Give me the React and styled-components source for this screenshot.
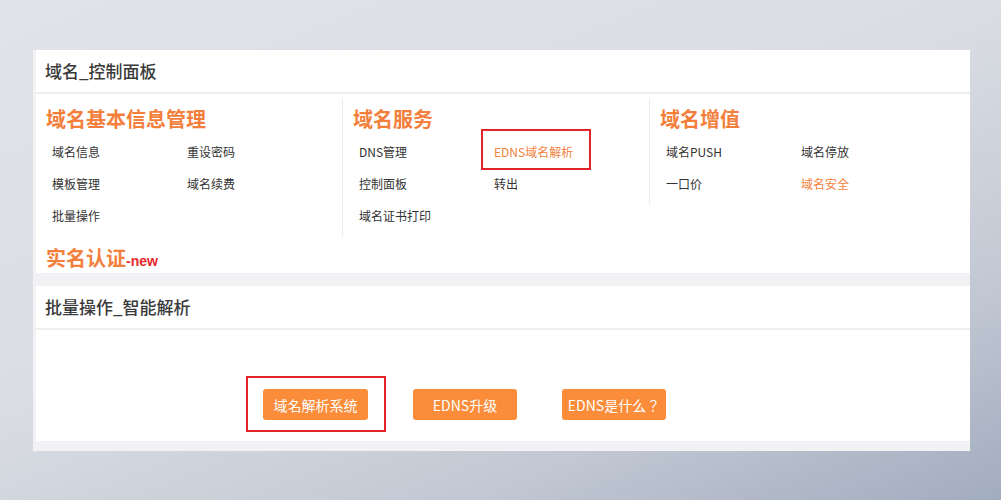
import React from "react";
import styled, { createGlobalStyle } from "styled-components";

const Global = createGlobalStyle`
  html, body { margin: 0; padding: 0; }
  body {
    font-family: "Noto Sans CJK SC", "Noto Sans", sans-serif;
    width: 1001px;
    height: 500px;
    overflow: hidden;
  }
  * { box-sizing: border-box; }
`;

const Page = styled.div`
  width: 1001px;
  height: 500px;
  padding: 50px 0 0 33px;
  background: linear-gradient(158deg, #e0e3e8 0%, #dadde3 45%, #c3c9d4 75%, #a2acbf 100%);
`;

const Panel = styled.div`
  width: 937px;
  background: #f2f2f4;
  padding: 0 0 10px 3px;
  display: flex;
  flex-direction: column;
  gap: 13px;
`;

const Card = styled.section`
  background: #ffffff;
  display: flex;
  flex-direction: column;
`;

const CardHeader = styled.h2`
  margin: 0;
  height: 44px;
  padding: 0 0 2px 9px;
  border-bottom: 2px solid #eeeeee;
  display: flex;
  align-items: center;
  font-size: 17px;
  font-weight: 500;
  color: #3a3a3a;
`;

const CardBody = styled.div`
  padding: ${(p) => p.$pad || "0"};
  display: flex;
  flex-direction: ${(p) => (p.$row ? "row" : "column")};
  align-items: flex-start;
  gap: ${(p) => p.$gap || "0"};
`;

const Columns = styled.div`
  display: flex;
  align-items: flex-start;
  margin-top: 4px;
`;

const Column = styled.div`
  width: ${(p) => p.$w}px;
  padding: 7px 0 5px 10px;
  border-left: ${(p) => (p.$divider ? "1px solid #ececec" : "none")};
`;

const Heading = styled.h3`
  margin: 0 0 3px;
  height: 28px;
  font-size: 20px;
  line-height: 28px;
  font-weight: 700;
  color: #f47f3c;
`;

const NewTag = styled.span`
  font-family: "Liberation Sans", Arial, sans-serif;
  font-size: 14px;
  line-height: 1;
  font-weight: 700;
  color: #e8262c;
`;

const LinkGrid = styled.div`
  display: grid;
  grid-template-columns: 135px 135px;
  padding-left: 6px;
`;

const LinkItem = styled.a`
  position: relative;
  font-size: 12px;
  line-height: 32px;
  height: 32px;
  color: ${(p) => (p.$accent ? "#f47f3c" : "#333333")};
  text-decoration: none;
  white-space: nowrap;
  justify-self: start;
`;

const Mark = styled.span`
  position: absolute;
  left: ${(p) => p.$l}px;
  top: ${(p) => p.$t}px;
  width: ${(p) => p.$w}px;
  height: ${(p) => p.$h}px;
  border: 2px solid #e3242b;
  pointer-events: none;
`;

const ExtraHeading = styled(Heading)`
  margin: 7px 0 1px 10px;
`;

const ButtonWrap = styled.div`
  position: relative;
`;

const ActionButton = styled.button`
  width: ${(p) => p.$w || 104}px;
  height: 31px;
  border: none;
  border-radius: 3px;
  background: #fa8c3a;
  color: #ffffff;
  font-family: "Noto Sans CJK JP", "Noto Sans CJK SC", sans-serif;
  font-size: 14px;
  padding: 0;
  cursor: pointer;
`;

const groups = [
  {
    title: "域名基本信息管理",
    w: 306,
    links: [
      { t: "域名信息" },
      { t: "重设密码" },
      { t: "模板管理" },
      { t: "域名续费" },
      { t: "批量操作" },
    ],
  },
  {
    title: "域名服务",
    w: 307,
    divider: true,
    links: [
      { t: "DNS管理" },
      { t: "EDNS域名解析", accent: true, mark: true },
      { t: "控制面板" },
      { t: "转出" },
      { t: "域名证书打印" },
    ],
  },
  {
    title: "域名增值",
    w: 300,
    divider: true,
    links: [
      { t: "域名PUSH" },
      { t: "域名停放" },
      { t: "一口价" },
      { t: "域名安全", accent: true },
    ],
  },
];

export default function App() {
  return (
    <>
      <Global />
      <Page>
        <Panel>
          <Card>
            <CardHeader>域名_控制面板</CardHeader>
            <CardBody>
              <Columns>
                {groups.map((g) => (
                  <Column key={g.title} $w={g.w} $divider={g.divider}>
                    <Heading>{g.title}</Heading>
                    <LinkGrid>
                      {g.links.map((l) => (
                        <LinkItem key={l.t} href="#" $accent={l.accent}>
                          {l.t}
                          {l.mark && <Mark $l={-13} $t={-7} $w={110} $h={41} />}
                        </LinkItem>
                      ))}
                    </LinkGrid>
                  </Column>
                ))}
              </Columns>
              <ExtraHeading>
                实名认证<NewTag>-new</NewTag>
              </ExtraHeading>
            </CardBody>
          </Card>
          <Card>
            <CardHeader>批量操作_智能解析</CardHeader>
            <CardBody $row $pad="59px 0 21px 227px" $gap="45px">
              <ButtonWrap>
                <ActionButton $w={105}>域名解析系统</ActionButton>
                <Mark $l={-17} $t={-13} $w={140} $h={56} />
              </ButtonWrap>
              <ActionButton>EDNS升级</ActionButton>
              <ActionButton>EDNS是什么？</ActionButton>
            </CardBody>
          </Card>
        </Panel>
      </Page>
    </>
  );
}
